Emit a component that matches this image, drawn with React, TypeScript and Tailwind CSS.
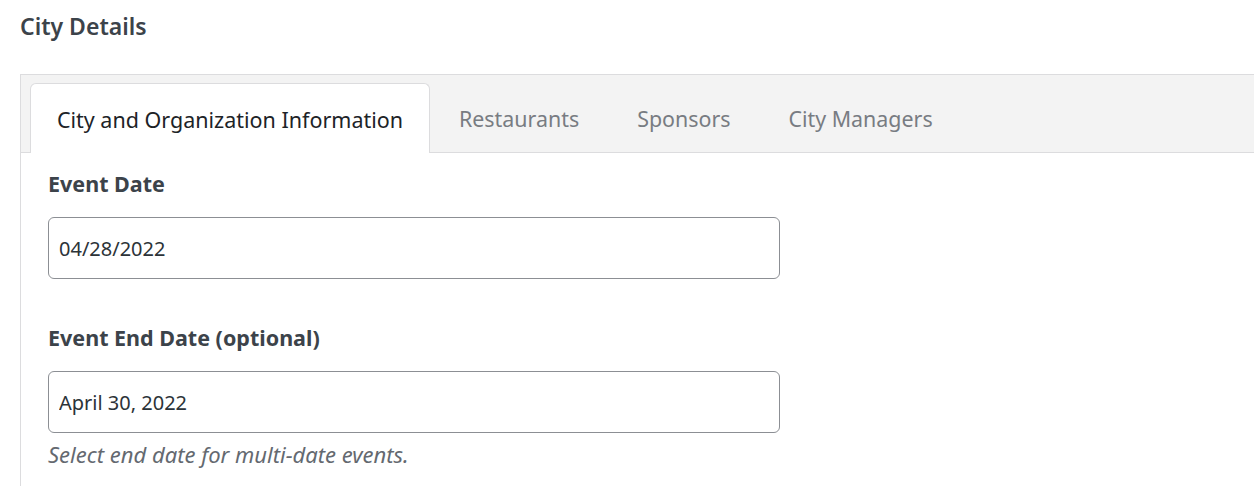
const tabs = ["City and Organization Information", "Restaurants", "Sponsors", "City Managers"];

export default function App() {
  return (
    <div
      className="min-h-[486px] w-[1254px] overflow-hidden bg-white pt-[10px] pl-[20px]"
      style={{ fontFamily: "'Noto Sans', 'Open Sans', sans-serif" }}
    >
      <h1 className="text-[23px] leading-[32px] font-semibold text-[#3c434a]">City Details</h1>

      <div className="mt-[32px] w-[1250px] border-t border-l border-[#dcdcde]">
        <div className="flex h-[78px] items-end border-b border-[#dcdcde] bg-[#f3f3f3] pl-[9px]">
          {tabs.map((t, i) =>
            i === 0 ? (
              <div
                key={t}
                className="-mb-px flex h-[70px] w-[400px] items-center justify-center rounded-t-[6px] border border-b-0 border-[#dcdcde] bg-white pt-[4px] text-[21.5px] text-[#1d2327]"
              >
                {t}
              </div>
            ) : (
              <div key={t} className="flex h-[69px] items-center px-[29px] pt-[4px] text-[21.4px] text-[#787c82]">
                {t}
              </div>
            )
          )}
        </div>

        <div className="pl-[27px] pt-[16px] pb-[20px]">
          <label className="block text-[21.5px] leading-[30px] font-bold text-[#3c434a]">Event Date</label>
          <input
            readOnly
            value="04/28/2022"
            className="mt-[18px] block h-[62px] w-[732px] rounded-[6px] border border-[#8c8f94] bg-white px-[10px] text-[20px] text-[#2c3338] outline-none"
          />

          <label className="mt-[44px] block text-[21.5px] leading-[30px] font-bold text-[#3c434a]">
            Event End Date (optional)
          </label>
          <input
            readOnly
            value="April 30, 2022"
            className="mt-[18px] block h-[62px] w-[732px] rounded-[6px] border border-[#8c8f94] bg-white px-[10px] text-[20px] text-[#2c3338] outline-none"
          />
          <p className="mt-[4px] text-[22px] leading-[34px] italic text-[#646970]">Select end date for multi-date events.</p>
        </div>
      </div>
    </div>
  );
}
